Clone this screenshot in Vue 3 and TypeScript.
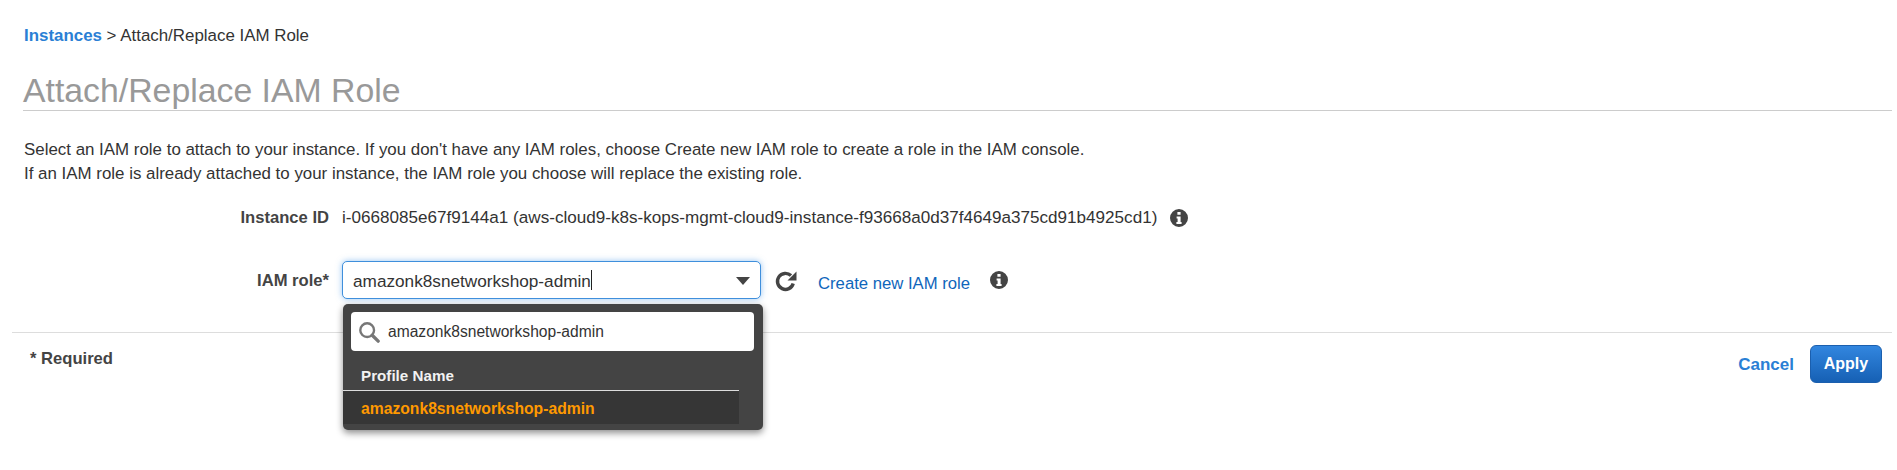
<script setup lang="ts">
const title = 'Attach/Replace IAM Role'
const role = 'amazonk8snetworkshop-admin'
</script>

<template>
  <div class="page">
    <div class="crumbs"><a class="crumb-link">Instances</a> &gt; {{ title }}</div>
    <h1 class="title">{{ title }}</h1>
    <p class="intro">Select an IAM role to attach to your instance. If you don't have any IAM roles, choose Create new IAM role to create a role in the IAM console.<br />If an IAM role is already attached to your instance, the IAM role you choose will replace the existing role.</p>

    <div class="row row-instance">
      <div class="label">Instance ID</div>
      <div class="value">i-0668085e67f9144a1 (aws-cloud9-k8s-kops-mgmt-cloud9-instance-f93668a0d37f4649a375cd91b4925cd1)</div>
      <svg class="info info-a" viewBox="0 0 20 20"><path fill="#444" fill-rule="evenodd" d="M10 1a9 9 0 1 0 0 18 9 9 0 0 0 0-18ZM8.400 3.900h3.200v2.900H8.400ZM7.600 8.400h4v5.700h1v2H7.400v-2h1.200v-3.700H7.600Z" /></svg>
    </div>

    <div class="row row-role">
      <div class="label label-role">IAM role*</div>
      <div class="select-wrap">
        <div class="select">
          <span class="select-text">{{ role }}</span><span class="caret"></span>
          <span class="arrow"></span>
        </div>
        <div class="menu">
          <div class="search">
            <svg class="search-icon" viewBox="0 0 24 24"><circle cx="10" cy="10" r="7.500" fill="none" stroke="#777" stroke-width="2.600" /><path d="M15.500 15.500 22 22" stroke="#777" stroke-width="3.600" stroke-linecap="round" /></svg>
            <span>{{ role }}</span>
          </div>
          <div class="menu-head">Profile Name</div>
          <div class="menu-row">{{ role }}</div>
        </div>
      </div>
      <svg class="refresh" viewBox="0 0 24 24"><path d="M19.200 14.500A8 8 0 1 1 17 6.600" fill="none" stroke="#444" stroke-width="3.400" /><path d="M22.500 2.500V11.500H13.500Z" fill="#444" /></svg>
      <a class="create">Create new IAM role</a>
      <svg class="info info-b" viewBox="0 0 20 20"><path fill="#444" fill-rule="evenodd" d="M10 1a9 9 0 1 0 0 18 9 9 0 0 0 0-18ZM8.400 3.900h3.200v2.900H8.400ZM7.600 8.400h4v5.700h1v2H7.400v-2h1.200v-3.700H7.600Z" /></svg>
    </div>

    <div class="footer">
      <div class="required">* Required</div>
      <div class="actions">
        <a class="cancel">Cancel</a>
        <button class="apply" type="button">Apply</button>
      </div>
    </div>
  </div>
</template>

<style>
html, body { background: #fff; }
</style>

<style scoped>
.page {
  width: 1897px;
  height: 470px;
  overflow: hidden;
  padding: 26px 5px 0 12px;
  box-sizing: border-box;
  font-family: "Liberation Sans", Arial, sans-serif;
  color: #444;
}
.crumbs {
  margin-left: 12px;
  font-size: 16.900px;
  line-height: 20px;
  color: #333;
}
.crumb-link {
  color: #2a7fd5;
  font-weight: 700;
}
.title {
  margin: 24px 0 0 11px;
  height: 40px;
  border-bottom: 1px solid #ccc;
  font-size: 33.800px;
  line-height: 40px;
  font-weight: 400;
  color: #999;
}
.intro {
  margin: 27px 0 0 12px;
  font-size: 16.900px;
  line-height: 24px;
  color: #333;
}
.row {
  display: flex;
  align-items: center;
}
.row-instance {
  margin-top: 20px;
  height: 24px;
}
.row-role {
  margin-top: 31px;
  height: 38px;
}
.label {
  width: 317px;
  margin-right: 13px;
  text-align: right;
  font-size: 16.600px;
  font-weight: 700;
  color: #444;
}
.label-role {
  padding-top: 2px;
}
.value {
  font-size: 17.100px;
  color: #333;
}
.info { width: 20px; height: 20px; flex: none; }
.info-a { margin-left: 12px; }
.info-b { margin-left: 19px; }
.select-wrap {
  position: relative;
  width: 419px;
  height: 38px;
  flex: none;
}
.select {
  height: 38px;
  box-sizing: border-box;
  display: flex;
  align-items: center;
  padding-left: 10px;
  background: #fff;
  border: 1px solid #3f8fdc;
  border-radius: 5px;
  box-shadow: 0 0 6px rgba(70, 150, 230, 0.55);
  position: relative;
}
.select-text {
  font-size: 17.200px;
  padding-top: 2px;
  color: #333;
}
.caret {
  width: 1px;
  height: 20px;
  background: #222;
}
.arrow {
  position: absolute;
  right: 10px;
  top: 15px;
  border-left: 7px solid transparent;
  border-right: 7px solid transparent;
  border-top: 8px solid #444;
}
.menu {
  position: absolute;
  left: 1px;
  top: 43px;
  width: 420px;
  height: 126px;
  background: #444;
  border-radius: 5px;
  box-shadow: 0 3px 7px rgba(0, 0, 0, 0.45);
  z-index: 2;
}
.search {
  margin: 8px 9px 0 8px;
  height: 39px;
  display: flex;
  align-items: center;
  padding-left: 7px;
  box-sizing: border-box;
  background: #fff;
  border-radius: 4px;
  font-size: 15.600px;
  color: #333;
}
.search-icon {
  width: 22px;
  height: 22px;
  margin-right: 8px;
}
.menu-head {
  margin-top: 9px;
  height: 31px;
  line-height: 32px;
  width: 396px;
  padding-left: 18px;
  box-sizing: border-box;
  border-bottom: 1px solid #ddd;
  color: #f2f2f2;
  font-size: 15.200px;
  font-weight: 700;
}
.menu-row {
  width: 396px;
  height: 33px;
  line-height: 35px;
  padding-left: 18px;
  box-sizing: border-box;
  background: #363636;
  color: #f90;
  font-size: 15.700px;
  font-weight: 700;
}
.refresh {
  width: 24px;
  height: 24px;
  margin-left: 13px;
  margin-top: 2px;
  flex: none;
}
.create {
  margin-left: 20px;
  margin-top: 8px;
  color: #0f66bb;
  font-size: 16.700px;
}
.footer {
  margin-top: 33px;
  border-top: 1px solid #ddd;
  display: flex;
  justify-content: space-between;
  padding-top: 12px;
}
.required {
  margin-left: 18px;
  padding-top: 2px;
  font-size: 16.600px;
  font-weight: 700;
  line-height: 24px;
  color: #444;
}
.actions {
  display: flex;
  align-items: center;
  margin-right: 10px;
}
.cancel {
  color: #2a7fd5;
  font-size: 17px;
  font-weight: 700;
  margin-top: 2px;
  margin-right: 16px;
}
.apply {
  width: 72px;
  height: 38px;
  border: 1px solid #1b5fae;
  border-radius: 6px;
  background: linear-gradient(#3286df, #1660b4);
  color: #fff;
  font-family: inherit;
  font-size: 16px;
  font-weight: 700;
  padding: 0;
}
</style>
